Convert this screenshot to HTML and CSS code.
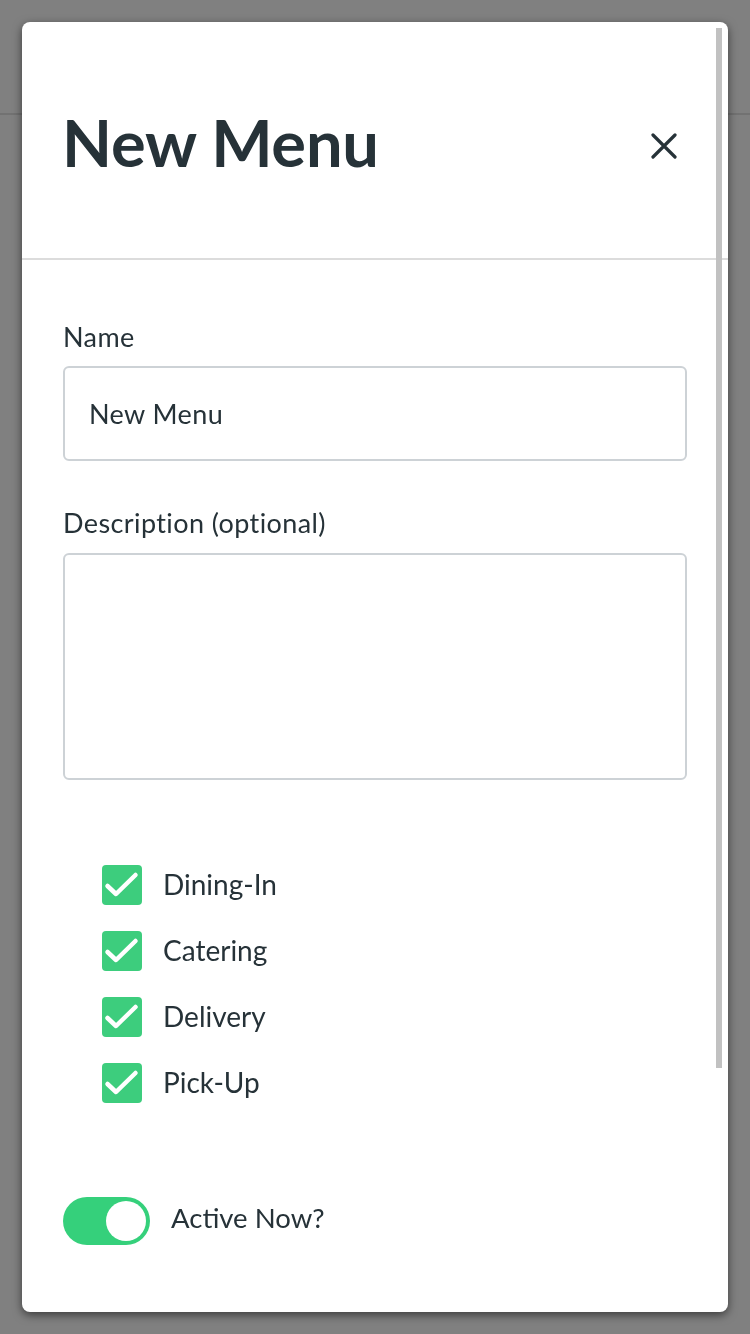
FILE: index.html
```html
<!DOCTYPE html>
<html lang="en">
<head>
<meta charset="utf-8">
<title>New Menu</title>
<link rel="stylesheet" href="styles.css">
</head>
<body>
<div class="page">
  <div class="page-header"></div>
</div>
<div class="modal">
  <div class="modal-header">
    <h1 class="modal-title">New Menu</h1>
    <button class="close-btn" aria-label="Close">
      <svg width="26" height="26" viewBox="0 0 26 26"><path d="M2 2 L24 24 M24 2 L2 24" stroke="#263238" stroke-width="3.2" stroke-linecap="round" fill="none"/></svg>
    </button>
  </div>
  <div class="modal-body">
    <label class="field-label">Name</label>
    <div class="input">New Menu</div>
    <label class="field-label desc-label">Description (optional)</label>
    <div class="textarea"></div>
    <ul class="checks">
      <li class="check-row"><span class="box"><svg width="40" height="40" viewBox="0 0 40 40"><polyline points="5.5,21 14,29 33.5,10" fill="none" stroke="#fff" stroke-width="4.5" stroke-linecap="round" stroke-linejoin="round"/></svg></span><span class="check-label">Dining-In</span></li>
      <li class="check-row"><span class="box"><svg width="40" height="40" viewBox="0 0 40 40"><polyline points="5.5,21 14,29 33.5,10" fill="none" stroke="#fff" stroke-width="4.5" stroke-linecap="round" stroke-linejoin="round"/></svg></span><span class="check-label">Catering</span></li>
      <li class="check-row"><span class="box"><svg width="40" height="40" viewBox="0 0 40 40"><polyline points="5.5,21 14,29 33.5,10" fill="none" stroke="#fff" stroke-width="4.5" stroke-linecap="round" stroke-linejoin="round"/></svg></span><span class="check-label">Delivery</span></li>
      <li class="check-row"><span class="box"><svg width="40" height="40" viewBox="0 0 40 40"><polyline points="5.5,21 14,29 33.5,10" fill="none" stroke="#fff" stroke-width="4.5" stroke-linecap="round" stroke-linejoin="round"/></svg></span><span class="check-label">Pick-Up</span></li>
    </ul>
    <div class="toggle-row">
      <span class="toggle"><span class="knob"></span></span>
      <span class="toggle-label">Active Now?</span>
    </div>
  </div>
  <div class="scroll-thumb"></div>
</div>
</body>
</html>
```
FILE: styles.css
```css
* { box-sizing: border-box; }
html, body {
  margin: 0;
  padding: 0;
  width: 750px;
  height: 1334px;
  overflow: hidden;
  background: #808080;
  font-family: Lato, "Open Sans", "Liberation Sans", sans-serif;
  color: #263238;
}
.page { height: 1334px; }
.page-header {
  height: 115px;
  border-bottom: 2px solid #727272;
}
.modal {
  position: fixed;
  top: 22px;
  left: 22px;
  width: 706px;
  height: 1290px;
  background: #fff;
  border-radius: 8px;
  box-shadow: 0 3px 10px rgba(0,0,0,0.55);
  overflow: hidden;
}
.modal-header {
  height: 238px;
  border-bottom: 2px solid #dcdcdc;
  display: flex;
  align-items: center;
  justify-content: space-between;
  padding: 5px 51px 0 40px;
}
.modal-title {
  margin: 0;
  font-size: 65px;
  font-weight: 700;
  line-height: 1;
  letter-spacing: -0.2px;
}
.close-btn {
  border: 0;
  background: none;
  padding: 0;
  margin-top: 6px;
  width: 26px;
  height: 26px;
  display: flex;
}
.modal-body {
  padding: 62px 41px 0 41px;
  display: flex;
  flex-direction: column;
}
.field-label {
  font-size: 27px;
  line-height: 30px;
  letter-spacing: 0.4px;
  margin-bottom: 14px;
  display: block;
}
.desc-label {
  margin-top: 47px;
  margin-bottom: 15px;
}
.input {
  height: 95px;
  border: 2px solid #cdd2d6;
  border-radius: 6px;
  padding-left: 24px;
  display: flex;
  align-items: center;
  font-size: 27px;
  line-height: 30px;
  letter-spacing: 0.4px;
}
.textarea {
  height: 227px;
  border: 2px solid #cdd2d6;
  border-radius: 6px;
}
.checks {
  list-style: none;
  margin: 85px 0 0 0;
  padding: 0 0 0 39px;
  display: flex;
  flex-direction: column;
  gap: 26px;
}
.check-row {
  display: flex;
  align-items: center;
  gap: 21px;
  height: 40px;
}
.box {
  width: 40px;
  height: 40px;
  border-radius: 4px;
  background: #3dcd7d;
  display: flex;
}
.check-label {
  font-size: 28px;
  line-height: 38px;
  padding-bottom: 2px;
}
.toggle-row {
  margin-top: 94px;
  display: flex;
  align-items: center;
  gap: 21px;
}
.toggle {
  width: 87px;
  height: 48px;
  border-radius: 24px;
  background: #35d07b;
  display: flex;
  justify-content: flex-end;
  align-items: center;
  padding-right: 4px;
}
.knob {
  width: 40px;
  height: 40px;
  border-radius: 50%;
  background: #fff;
}
.toggle-label {
  font-size: 27.5px;
  line-height: 42px;
  padding-bottom: 6px;
}
.scroll-thumb {
  position: absolute;
  top: 6px;
  right: 6px;
  width: 6px;
  height: 1040px;
  background: #c1c1c1;
}
```
